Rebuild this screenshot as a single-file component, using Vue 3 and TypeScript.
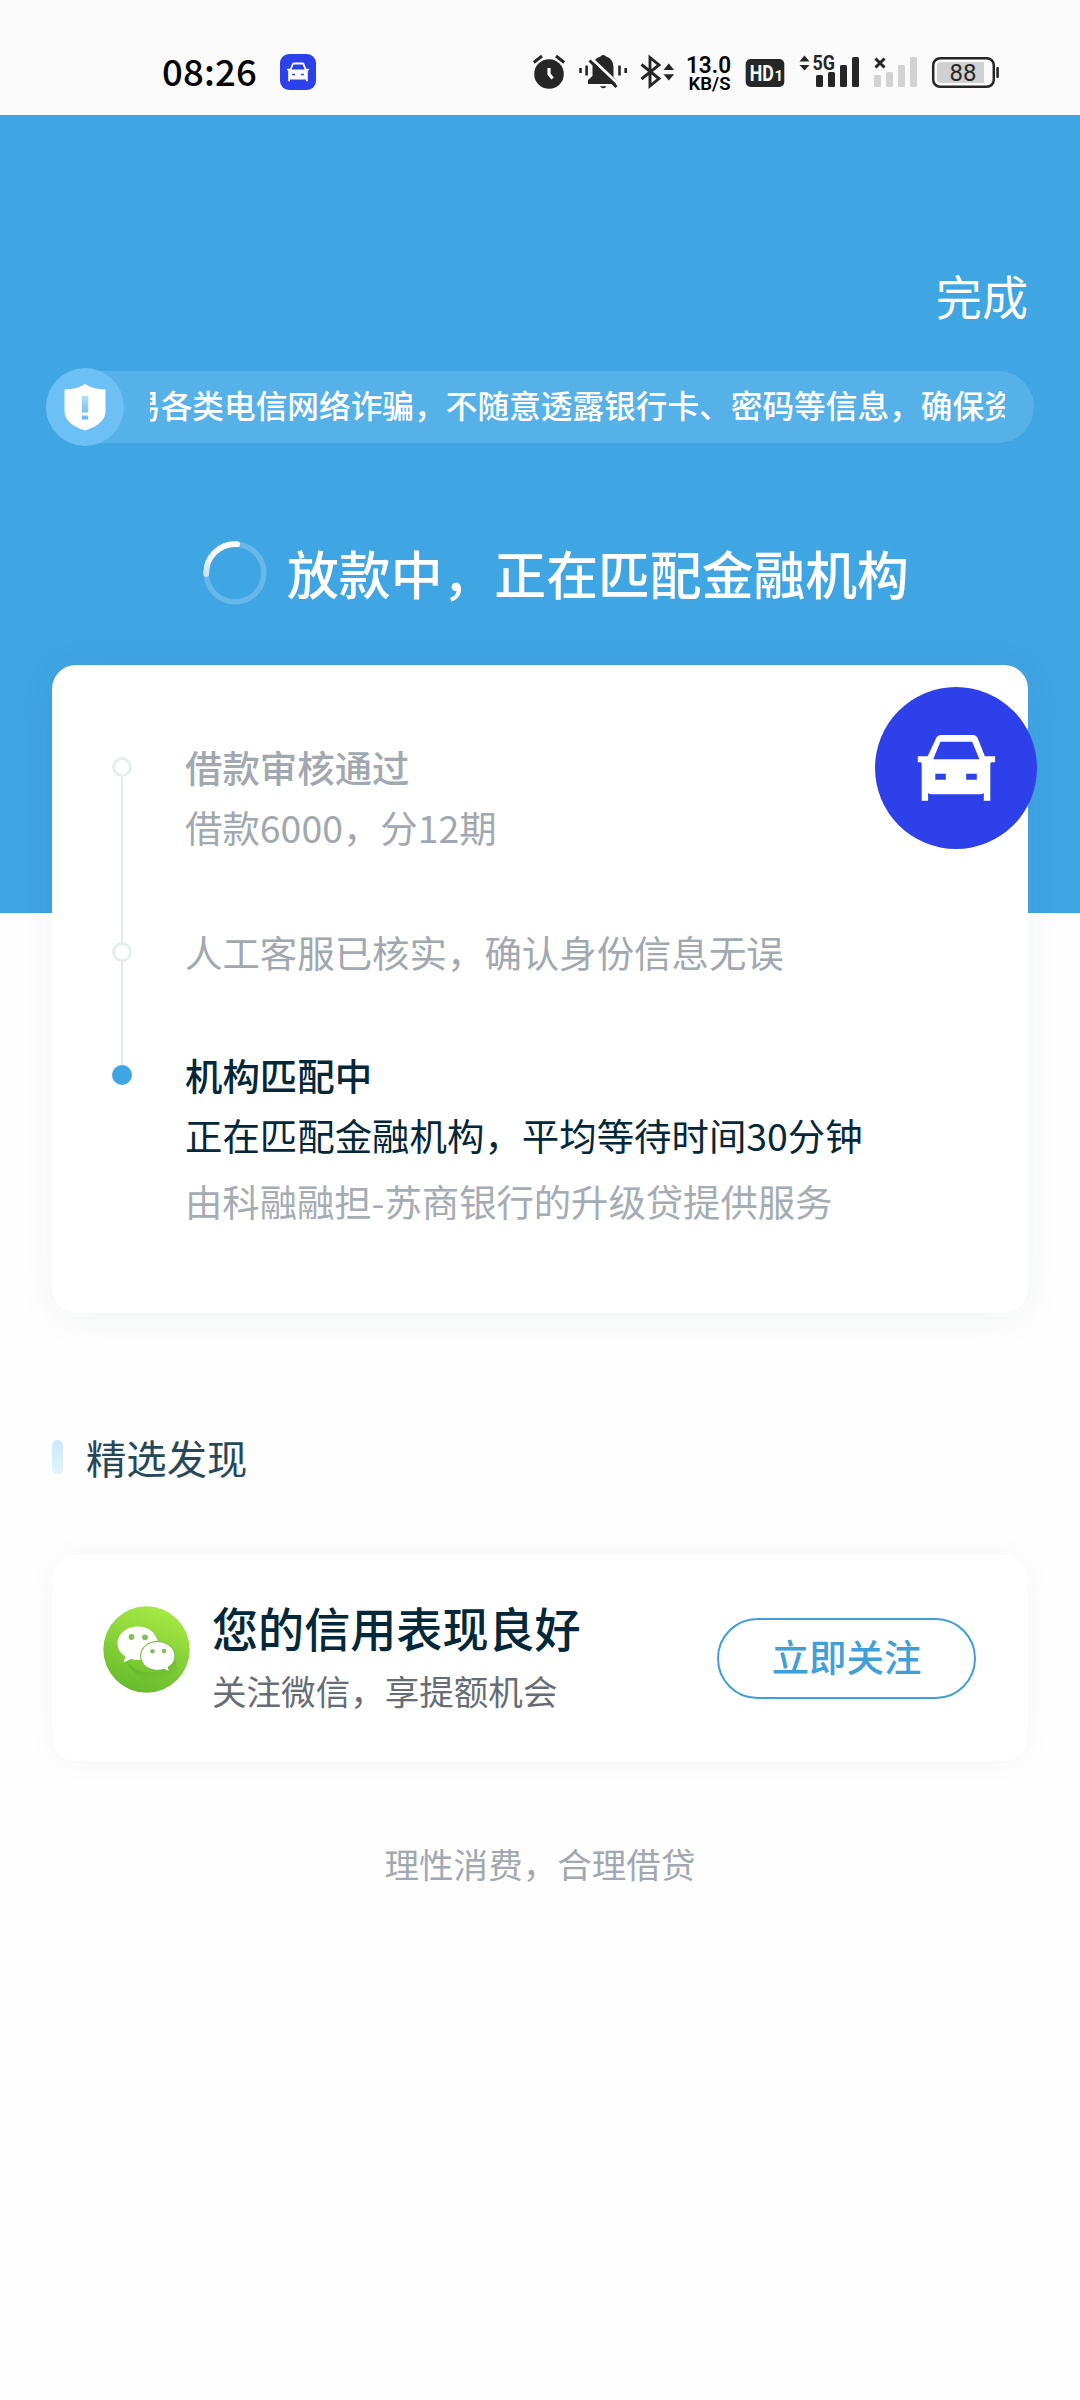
<script setup lang="ts">
interface Step {
  title?: string
  lines: string[]
  note?: string
  active: boolean
}

const notice = '易各类电信网络诈骗，不随意透露银行卡、密码等信息，确保资'

const steps: Step[] = [
  { title: '借款审核通过', lines: ['借款6000，分12期'], active: false },
  { lines: ['人工客服已核实，确认身份信息无误'], active: false },
  {
    title: '机构匹配中',
    lines: ['正在匹配金融机构，平均等待时间30分钟'],
    note: '由科融融担-苏商银行的升级贷提供服务',
    active: true,
  },
]

const carPath =
  'M52.7 69.2 61.4 50.6Q62.7 48 65.6 48H98.4Q101.2 48 102.4 50.6L109.9 69.2H120.1V75.2H116.4Q115.3 75.6 115.3 77V113.7H108.8V106Q107.5 107.2 105 107.2H57Q54.3 107.2 53.1 106V113.7H46.7V77Q46.7 75.6 45.6 75.2H42.8V69.2ZM65.4 54.7 58.2 72.2H104.4L97.2 54.7ZM60.3 86.7V92.8H70.8V86.7ZM91.2 86.7V92.8H101.8V86.7Z'
</script>

<template>
  <div class="screen">
    <header class="status">
      <span class="clock">08:26</span>
      <svg class="app-badge" viewBox="18 18 126 126"><path :d="carPath" fill="#fff" fill-rule="evenodd" /></svg>
      <div class="indicators">
        <!-- alarm -->
        <svg width="42" height="45" viewBox="530 50 42 45">
          <circle cx="549" cy="74" r="14.8" fill="#262626" />
          <path d="M533.8 62.5 542 56M556 56l8.200 6.500" stroke="#262626" stroke-width="3" />
          <path d="M549 68v6l3.600 4.600" fill="none" stroke="#fafafa" stroke-width="3.200" />
        </svg>
        <!-- muted bell -->
        <svg width="62" height="45" viewBox="572 50 62 45">
          <path d="M600.500 56.500Q601 55 603.300 55T606 56.500Q613.500 59 613.500 67V77L618 82V84H588V80L592.500 76V67Q592.500 59 600.500 56.500Z" fill="#262626" />
          <path d="M600 86.300h6.600q-1.200 2-3.300 2t-3.300-2Z" fill="#262626" />
          <path d="M591.500 58.500 619.500 85" stroke="#fafafa" stroke-width="3" />
          <path d="M589.500 60.500 616.500 87" stroke="#262626" stroke-width="3" />
          <path d="M580.500 68v5M586.600 65.500v10M619.500 65.500v10M625.700 68v5" stroke="#262626" stroke-width="2.600" />
        </svg>
        <!-- bluetooth -->
        <svg width="48" height="45" viewBox="634 50 48 45">
          <path d="M641.500 64.500 659 78.500 650 86V57.500L659 65 641.500 79" fill="none" stroke="#262626" stroke-width="2.900" />
          <path d="M663.500 70 668.800 63.500l5.300 6.500ZM663.500 74.300 668.800 80.500l5.300-6.200Z" fill="#262626" />
        </svg>
        <!-- network speed -->
        <svg width="56" height="45" viewBox="682 50 56 45">
          <text x="686" y="72.800" class="num" font-size="24" font-weight="600" textLength="45" lengthAdjust="spacingAndGlyphs">13.0</text>
          <text x="688.500" y="89.800" class="num" font-size="17.500" font-weight="600" textLength="42" lengthAdjust="spacingAndGlyphs">KB/S</text>
        </svg>
        <!-- HD voice -->
        <svg width="54" height="45" viewBox="738 50 54 45">
          <rect x="745.700" y="59" width="38.600" height="28" rx="5" fill="#262626" />
          <text x="749.800" y="81" class="num" font-size="22.500" font-weight="700" fill="#fafafa" textLength="24" lengthAdjust="spacingAndGlyphs">HD</text>
          <text x="774.500" y="81" class="num" font-size="15" font-weight="700" fill="#fafafa">1</text>
        </svg>
        <!-- primary signal -->
        <svg width="74" height="45" viewBox="792 50 74 45">
          <path d="M799.500 61.500 804.500 55.500l5 6ZM799.500 65 804.500 70.500l5-5.500Z" fill="#262626" />
          <text x="812.500" y="70" class="num" font-size="20.500" font-weight="700" fill="#262626" textLength="22.500" lengthAdjust="spacingAndGlyphs">5G</text>
          <rect x="816" y="75" width="7" height="12" rx="1.500" fill="#262626" />
          <rect x="828" y="72" width="7" height="15" rx="1.500" fill="#262626" />
          <rect x="840" y="65" width="7" height="22" rx="1.500" fill="#262626" />
          <rect x="852" y="57" width="7" height="30" rx="1.500" fill="#262626" />
        </svg>
        <!-- secondary signal, no service -->
        <svg width="58" height="45" viewBox="866 50 58 45">
          <path d="M875.500 58.500 884.500 67.500M884.500 58.500 875.500 67.500" stroke="#262626" stroke-width="3" />
          <rect x="874" y="75" width="7" height="12" rx="1.500" fill="#d2d2d2" />
          <rect x="886" y="72" width="7" height="15" rx="1.500" fill="#d2d2d2" />
          <rect x="898" y="65" width="7" height="22" rx="1.500" fill="#d2d2d2" />
          <rect x="910" y="57" width="7" height="30" rx="1.500" fill="#d2d2d2" />
        </svg>
        <!-- battery -->
        <svg width="80" height="45" viewBox="924 50 80 45">
          <rect x="933.200" y="58.200" width="60.600" height="28.600" rx="7" fill="none" stroke="#262626" stroke-width="2.500" />
          <path d="M941 62H984V83H941Q937 83 937 79V66Q937 62 941 62Z" fill="#d0d0d0" />
          <rect x="996.300" y="67" width="2.600" height="11" rx="1" fill="#262626" />
          <text x="949.500" y="81" class="num" font-size="23.500" font-weight="400" fill="#262626" textLength="27" lengthAdjust="spacingAndGlyphs">88</text>
        </svg>
      </div>
    </header>

    <section class="hero">
      <div class="nav"><span class="done">完成</span></div>
      <div class="notice">
        <div class="shield">
          <svg width="78" height="78" viewBox="0 0 78 78">
            <defs>
              <linearGradient id="mark" x1="0" y1="0" x2="0" y2="1">
                <stop offset="0" stop-color="#b5dcf7" />
                <stop offset="1" stop-color="#63b8ef" />
              </linearGradient>
            </defs>
            <path d="M39 16Q46 21 59.500 21.500V43Q59.500 56 39 62.500 18.500 56 18.500 43V21.500Q32 21 39 16Z" fill="#fff" />
            <path d="M35.800 28H42.200V44.500H35.800ZM35.800 47.500H42.200V51.500H35.800Z" fill="url(#mark)" />
          </svg>
        </div>
        <div class="marquee"><span>{{ notice }}</span></div>
      </div>
      <div class="headline">
        <svg class="spinner" width="64" height="64" viewBox="0 0 64 64">
          <defs>
            <linearGradient id="arc" x1="0" y1="1" x2="1" y2="0">
              <stop offset="0" stop-color="#c8e6f8" />
              <stop offset=".5" stop-color="#fff" />
            </linearGradient>
          </defs>
          <circle cx="32" cy="32" r="28.800" fill="none" stroke="#67b7ea" stroke-width="5.500" />
          <path d="M3.200 33A28.800 28.800 0 0 1 34 3.200" fill="none" stroke="url(#arc)" stroke-width="5.800" stroke-linecap="round" />
        </svg>
        <h1>放款中，正在匹配金融机构</h1>
      </div>
    </section>

    <section class="progress card">
      <ol>
        <li v-for="(step, i) in steps" :key="i" :class="{ active: step.active }">
          <div class="rail"><i class="dot"></i><i v-if="!step.active" class="line"></i></div>
          <div class="body">
            <p v-if="step.title" class="title">{{ step.title }}</p>
            <p v-for="line in step.lines" :key="line">{{ line }}</p>
            <p v-if="step.note" class="note">{{ step.note }}</p>
          </div>
        </li>
      </ol>
      <div class="float-ball">
        <svg width="162" height="162" viewBox="0 0 162 162"><path :d="carPath" fill="#fff" fill-rule="evenodd" /></svg>
      </div>
    </section>

    <h2 class="section-title">精选发现</h2>

    <section class="promo card">
      <svg class="wechat" width="87" height="87" viewBox="0 0 87 87">
        <defs>
          <linearGradient id="green" x1=".7" y1="0" x2=".4" y2="1">
            <stop offset="0" stop-color="#a9ea45" />
            <stop offset="1" stop-color="#66bb2c" />
          </linearGradient>
          <linearGradient id="shade" x1=".3" y1=".2" x2=".6" y2=".95">
            <stop offset="0" stop-color="#3f9820" stop-opacity=".55" />
            <stop offset="1" stop-color="#66bb2c" stop-opacity="0" />
          </linearGradient>
        </defs>
        <circle cx="43.500" cy="43.500" r="43.200" fill="url(#green)" />
        <path d="M22 54Q32 68 50 66 66 65 72 52L74 62Q66 78 48 78 32 71 22 54Z" fill="url(#shade)" />
        <path d="M35 20.500C23.800 20.500 14.500 28 14.500 37.500 14.500 43 17.500 47.500 22.500 50.500L20.500 56.500 28 53Q31.500 54.200 38 54C35.500 43 43 35.500 54.500 35 53 26.500 44.500 20.500 35 20.500Z" fill="#fff" />
        <path d="M54.500 35.500C45 35.500 37.700 41.800 37.700 50S45 64.300 54.500 64.300Q58 64.300 61 63.300L66.500 66 65.200 61C69.500 58.500 72 54.500 72 50 72 41.800 64 35.500 54.500 35.500Z" fill="#fff" stroke="#70ba3b" stroke-width="1" />
        <g fill="#85bd57">
          <circle cx="28.500" cy="31" r="2.900" /><circle cx="42" cy="31.300" r="2.900" />
          <circle cx="49.500" cy="45.200" r="2.300" /><circle cx="61" cy="45" r="2.300" />
        </g>
      </svg>
      <div class="promo-text">
        <h3>您的信用表现良好</h3>
        <p>关注微信，享提额机会</p>
      </div>
      <button type="button">立即关注</button>
    </section>

    <footer>理性消费，合理借贷</footer>
  </div>
</template>

<style>
body {
  margin: 0;
  background: #fefefe;
}
</style>

<style scoped>
.screen {
  width: 1080px;
  height: 2400px;
  overflow: hidden;
  background: #fefefe;
  font-family: "Noto Sans CJK SC", "Noto Sans", sans-serif;
}
h1, h2, h3, p, ol {
  margin: 0;
  padding: 0;
  font-weight: 400;
}
svg {
  display: block;
  flex: none;
}
.num {
  font-family: Roboto, "Noto Sans", sans-serif;
}
.status {
  display: flex;
  align-items: flex-start;
  height: 115px;
  background: #fafafa;
}
.clock {
  width: 118px;
  margin-left: 162px;
  margin-top: 47px;
  font-size: 36.5px;
  line-height: 48px;
  letter-spacing: 0.2px;
  font-weight: 500;
  color: #000;
}
.app-badge {
  width: 36px;
  height: 36px;
  margin-top: 54px;
  border-radius: 9px;
  background: #2e40ea;
}
.indicators {
  display: flex;
  margin-left: 214px;
  margin-top: 50px;
}
.hero {
  height: 798px;
  background: #3fa5e3;
  color: #fff;
}
.nav {
  display: flex;
  justify-content: flex-end;
  padding: 150px 52px 0 0;
}
.done {
  font-size: 46.08px;
  line-height: 60px;
}
.notice {
  display: flex;
  align-items: center;
  height: 72px;
  margin: 46px 46px 0;
  border-radius: 36px;
  background: #57b1e9;
}
.shield {
  flex: none;
  width: 78px;
  height: 78px;
  border-radius: 50%;
  background: #6dc0f5;
}
.marquee {
  display: flex;
  width: 855px;
  margin-left: 26px;
  overflow: hidden;
  white-space: nowrap;
  font-size: 31.68px;
  line-height: 67px;
  height: 72px;
  font-weight: 500;
}
.marquee span {
  margin-left: -21px;
}
.headline {
  display: flex;
  align-items: center;
  height: 80px;
  margin-top: 90px;
  padding-left: 203px;
}
.headline h1 {
  margin-left: 20px;
  font-size: 51.84px;
  line-height: 76px;
  font-weight: 500;
}
.card {
  margin: 0 52px;
  border-radius: 24px;
  background: #fff;
}
.progress {
  position: relative;
  height: 648px;
  margin-top: -248px;
  box-sizing: border-box;
  padding: 72px 60px 0;
  box-shadow: 0 4px 42px rgba(20, 60, 60, 0.055);
}
.progress ol {
  list-style: none;
}
.progress li {
  display: flex;
  color: #a1a8b0;
  font-size: 37.44px;
  line-height: 60px;
}
.progress li:nth-child(1) {
  height: 185px;
}
.progress li:nth-child(2) {
  height: 123px;
}
.rail {
  display: flex;
  flex-direction: column;
  align-items: center;
  width: 20px;
  padding-top: 20px;
}
.dot {
  flex: none;
  box-sizing: border-box;
  width: 20px;
  height: 20px;
  border: 3px solid #e6eef0;
  border-radius: 50%;
}
.line {
  flex: 1;
  width: 2px;
  margin-bottom: -20px;
  background: #e3eaeb;
}
.active .dot {
  border: 0;
  background: #3fa5e3;
}
.body {
  margin-left: 53px;
}
.title {
  font-weight: 500;
}
.progress li.active {
  color: #04283a;
}
.body .note {
  padding-top: 6px;
  color: #a5acb4;
  letter-spacing: -0.1px;
}
.float-ball {
  position: absolute;
  top: 22px;
  right: -9px;
  width: 162px;
  height: 162px;
  border-radius: 50%;
  background: #2e40ea;
}
.section-title {
  display: flex;
  align-items: center;
  height: 60px;
  margin: 114px 52px 0;
  font-size: 40.32px;
  line-height: 60px;
  color: #264858;
}
.section-title::before {
  content: "";
  width: 11px;
  height: 34px;
  margin-right: 23px;
  border-radius: 5px;
  background: linear-gradient(#cce9fa, #e2f3fe);
}
.promo {
  display: flex;
  align-items: flex-start;
  height: 206px;
  margin-top: 68px;
  box-shadow: 0 0 32px rgba(20, 40, 60, 0.04);
}
.wechat {
  margin: 51px 0 0 51px;
}
.promo-text {
  width: 503px;
  margin: 37px 0 0 22px;
}
.promo-text h3 {
  font-size: 46.08px;
  line-height: 70px;
  font-weight: 500;
  color: #04283a;
}
.promo-text p {
  font-size: 34.56px;
  line-height: 56px;
  color: #666d75;
}
button {
  box-sizing: border-box;
  width: 259px;
  height: 81px;
  margin: 63px 0 0 2px;
  padding: 0 0 5px;
  border: 2px solid #3f9fd8;
  border-radius: 41px;
  background: transparent;
  color: #3f9fd8;
  font: 500 37.44px/56px "Noto Sans CJK SC", sans-serif;
}
footer {
  margin-top: 74px;
  font-size: 34.56px;
  line-height: 56px;
  text-align: center;
  color: #a1a8b0;
}
</style>
